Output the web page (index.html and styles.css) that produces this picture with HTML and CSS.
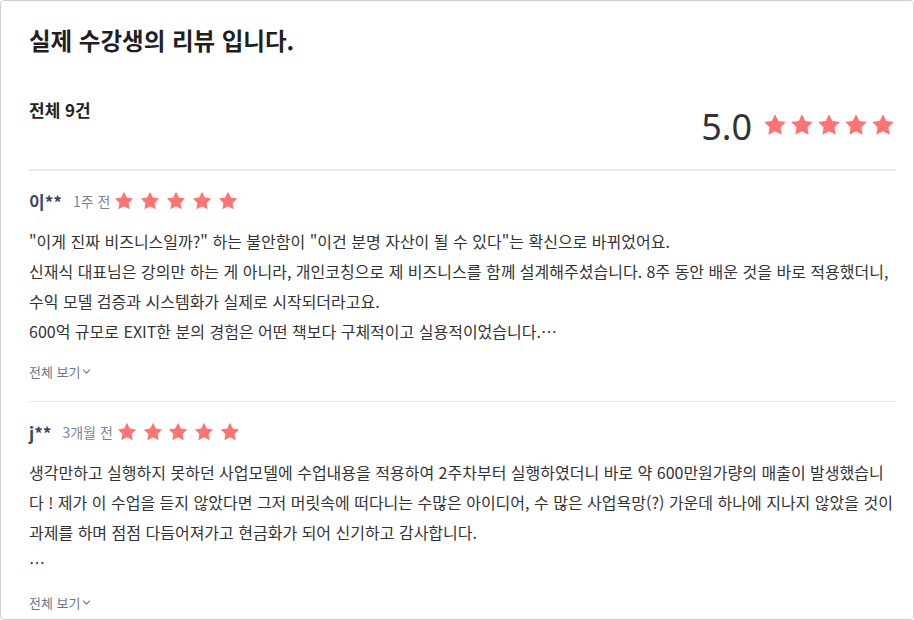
FILE: index.html
```html
<!DOCTYPE html>
<html lang="ko">
<head>
<meta charset="utf-8">
<link rel="stylesheet" href="styles.css">
</head>
<body>
<div class="card">
  <h1 class="title">실제 수강생의 리뷰 입니다.</h1>
  <div class="summary">
    <div class="total">전체 9건</div>
    <div class="score">
      <span class="score-num">5.0</span>
      <span class="stars stars-lg">
        <svg viewBox="0 0 24 24"><path d="M12 2l3.09 6.26L22 9.27l-5 4.87 1.18 6.88L12 17.77l-6.18 3.25L7 14.14 2 9.27l6.91-1.01z"/></svg>
        <svg viewBox="0 0 24 24"><path d="M12 2l3.09 6.26L22 9.27l-5 4.87 1.18 6.88L12 17.77l-6.18 3.25L7 14.14 2 9.27l6.91-1.01z"/></svg>
        <svg viewBox="0 0 24 24"><path d="M12 2l3.09 6.26L22 9.27l-5 4.87 1.18 6.88L12 17.77l-6.18 3.25L7 14.14 2 9.27l6.91-1.01z"/></svg>
        <svg viewBox="0 0 24 24"><path d="M12 2l3.09 6.26L22 9.27l-5 4.87 1.18 6.88L12 17.77l-6.18 3.25L7 14.14 2 9.27l6.91-1.01z"/></svg>
        <svg viewBox="0 0 24 24"><path d="M12 2l3.09 6.26L22 9.27l-5 4.87 1.18 6.88L12 17.77l-6.18 3.25L7 14.14 2 9.27l6.91-1.01z"/></svg>
      </span>
    </div>
  </div>

  <div class="review">
    <div class="review-head">
      <span class="name">이**</span>
      <span class="time">1주 전</span>
      <span class="stars stars-sm">
        <svg viewBox="0 0 24 24"><path d="M12 2l3.09 6.26L22 9.27l-5 4.87 1.18 6.88L12 17.77l-6.18 3.25L7 14.14 2 9.27l6.91-1.01z"/></svg>
        <svg viewBox="0 0 24 24"><path d="M12 2l3.09 6.26L22 9.27l-5 4.87 1.18 6.88L12 17.77l-6.18 3.25L7 14.14 2 9.27l6.91-1.01z"/></svg>
        <svg viewBox="0 0 24 24"><path d="M12 2l3.09 6.26L22 9.27l-5 4.87 1.18 6.88L12 17.77l-6.18 3.25L7 14.14 2 9.27l6.91-1.01z"/></svg>
        <svg viewBox="0 0 24 24"><path d="M12 2l3.09 6.26L22 9.27l-5 4.87 1.18 6.88L12 17.77l-6.18 3.25L7 14.14 2 9.27l6.91-1.01z"/></svg>
        <svg viewBox="0 0 24 24"><path d="M12 2l3.09 6.26L22 9.27l-5 4.87 1.18 6.88L12 17.77l-6.18 3.25L7 14.14 2 9.27l6.91-1.01z"/></svg>
      </span>
    </div>
    <p class="review-text">"이게 진짜 비즈니스일까?" 하는 불안함이 "이건 분명 자산이 될 수 있다"는 확신으로 바뀌었어요.<br>신재식 대표님은 강의만 하는 게 아니라, 개인코칭으로 제 비즈니스를 함께 설계해주셨습니다. 8주 동안 배운 것을 바로 적용했더니,<br>수익 모델 검증과 시스템화가 실제로 시작되더라고요.<br>600억 규모로 EXIT한 분의 경험은 어떤 책보다 구체적이고 실용적이었습니다.…</p>
    <div class="more">전체 보기<svg viewBox="0 0 10 10"><path d="M1.2 3L5 6.8 8.8 3"/></svg></div>
  </div>

  <div class="review">
    <div class="review-head">
      <span class="name">j**</span>
      <span class="time">3개월 전</span>
      <span class="stars stars-sm">
        <svg viewBox="0 0 24 24"><path d="M12 2l3.09 6.26L22 9.27l-5 4.87 1.18 6.88L12 17.77l-6.18 3.25L7 14.14 2 9.27l6.91-1.01z"/></svg>
        <svg viewBox="0 0 24 24"><path d="M12 2l3.09 6.26L22 9.27l-5 4.87 1.18 6.88L12 17.77l-6.18 3.25L7 14.14 2 9.27l6.91-1.01z"/></svg>
        <svg viewBox="0 0 24 24"><path d="M12 2l3.09 6.26L22 9.27l-5 4.87 1.18 6.88L12 17.77l-6.18 3.25L7 14.14 2 9.27l6.91-1.01z"/></svg>
        <svg viewBox="0 0 24 24"><path d="M12 2l3.09 6.26L22 9.27l-5 4.87 1.18 6.88L12 17.77l-6.18 3.25L7 14.14 2 9.27l6.91-1.01z"/></svg>
        <svg viewBox="0 0 24 24"><path d="M12 2l3.09 6.26L22 9.27l-5 4.87 1.18 6.88L12 17.77l-6.18 3.25L7 14.14 2 9.27l6.91-1.01z"/></svg>
      </span>
    </div>
    <p class="review-text">생각만하고 실행하지 못하던 사업모델에 수업내용을 적용하여 2주차부터 실행하였더니 바로 약 600만원가량의 매출이 발생했습니다 ! 제가 이 수업을 듣지 않았다면 그저 머릿속에 떠다니는 수많은 아이디어, 수 많은 사업욕망(?) 가운데 하나에 지나지 않았을 것이<br>과제를 하며 점점 다듬어져가고 현금화가 되어 신기하고 감사합니다.<br>…</p>
    <div class="more">전체 보기<svg viewBox="0 0 10 10"><path d="M1.2 3L5 6.8 8.8 3"/></svg></div>
  </div>
</div>
</body>
</html>
```

FILE: styles.css
```css
html, body {
  margin: 0;
  padding: 0;
  background: #ffffff;
}

body {
  font-family: "Noto Sans CJK KR", "Noto Sans", sans-serif;
  color: #333333;
}

.card {
  box-sizing: border-box;
  width: 914px;
  height: 620px;
  border: 1px solid #cfcfcf;
  border-radius: 4px;
  padding: 23px 17px 0 28px;
  overflow: hidden;
}

.title {
  margin: 0;
  font-size: 23.5px;
  line-height: 32px;
  font-weight: 700;
  color: #1f1f1f;
}

.summary {
  margin-top: 42px;
  display: flex;
  justify-content: space-between;
  align-items: flex-start;
  padding-bottom: 24px;
  border-bottom: 2px solid #e8e8e8;
}

.total {
  font-size: 17px;
  line-height: 24px;
  font-weight: 700;
  color: #222222;
}

.score {
  display: flex;
  align-items: center;
  margin-top: 7px;
  height: 40px;
}

.score-num {
  font-family: "Noto Sans", "Noto Sans CJK KR", sans-serif;
  font-size: 36px;
  line-height: 40px;
  color: #333333;
  margin-right: 10px;
  margin-top: 4px;
}

.stars {
  display: flex;
  align-items: center;
}

.stars svg {
  fill: #ff7373;
  display: block;
}

.stars-lg {
  gap: 1px;
}

.stars-lg svg {
  width: 26px;
  height: 26px;
}

.stars-sm {
  gap: 3.8px;
  margin-left: 3px;
}

.stars-sm svg {
  width: 22px;
  height: 22px;
}

.review {
  padding: 15px 0 19px;
  border-bottom: 1px solid #e6e6e6;
}

.review:last-child {
  border-bottom: none;
}

.review-head {
  display: flex;
  align-items: center;
  height: 30px;
}

.name {
  font-size: 17px;
  font-weight: 700;
  color: #3c475b;
  margin-right: 11px;
}

.time {
  font-size: 14px;
  color: #7b8598;
}

.review-text {
  margin: 10px 0 0;
  font-size: 16px;
  line-height: 30px;
  color: #333333;
}

.more {
  margin-top: 16px;
  display: flex;
  align-items: center;
  font-size: 13px;
  line-height: 20px;
  color: #6e7788;
}

.more svg {
  width: 9px;
  height: 9px;
  margin-left: 2px;
  margin-top: -1px;
  fill: none;
  stroke: #6e7788;
  stroke-width: 1.3;
}
```
